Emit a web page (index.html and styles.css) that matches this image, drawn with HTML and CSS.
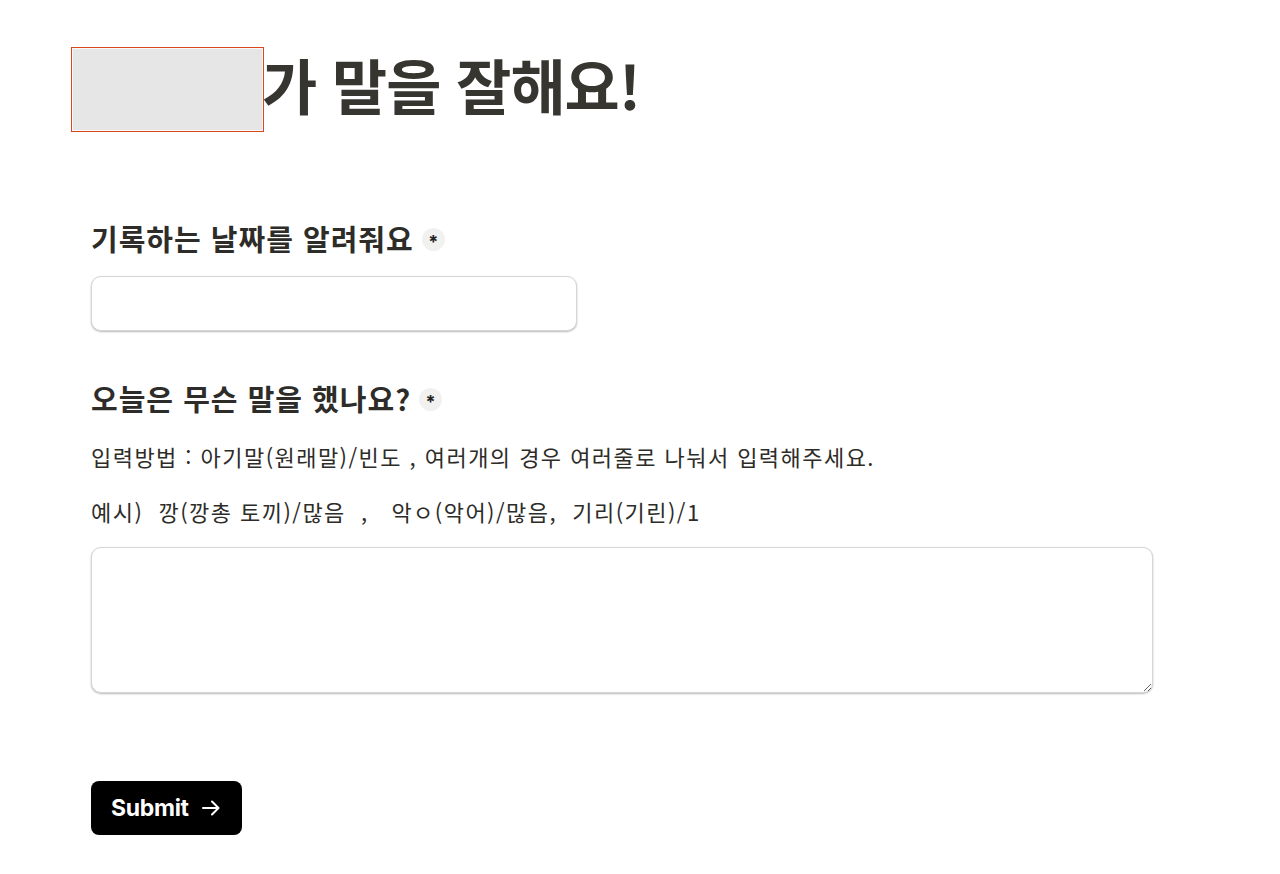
FILE: index.html
```html
<!DOCTYPE html>
<html lang="ko">
<head>
<meta charset="utf-8">
<title>말을 잘해요</title>
<link rel="stylesheet" href="styles.css">
</head>
<body>
<main class="page">
  <header class="title-row">
    <div class="name-box"><div class="name-fill"></div></div>
    <h1 class="title">가 말을 잘해요!</h1>
  </header>
  <form class="form">
    <section class="field field-date">
      <div class="label-row">
        <span class="label">기록하는 날짜를 알려줘요</span>
        <span class="req">*</span>
      </div>
      <input class="input" type="text">
    </section>
    <section class="field field-words">
      <div class="label-row">
        <span class="label">오늘은 무슨 말을 했나요?</span>
        <span class="req">*</span>
      </div>
      <p class="desc">입력방법 : 아기말(원래말)/빈도 , 여러개의 경우 여러줄로 나눠서 입력해주세요.</p>
      <p class="desc">예시)  깡(깡총 토끼)/많음  ,   악ㅇ(악어)/많음,  기리(기린)/1</p>
      <textarea class="textarea"></textarea>
    </section>
    <div class="actions">
      <button class="submit" type="button">Submit
        <svg class="arrow" width="20" height="20" viewBox="0 0 20 20" fill="none" stroke="currentColor" stroke-width="2" stroke-linecap="round" stroke-linejoin="round"><path d="M2 10h15"/><path d="M11 3.5l6.5 6.5-6.5 6.5"/></svg>
      </button>
    </div>
  </form>
</main>
</body>
</html>
```
FILE: styles.css
```css
* { box-sizing: border-box; }
html, body { margin: 0; padding: 0; background: #fff; }
body {
  font-family: "Inter", "Noto Sans CJK KR", sans-serif;
  color: #2f2e2a;
}
.page {
  padding: 47px 0 0 71px;
}
.title-row {
  display: flex;
  align-items: center;
  height: 85px;
}
.name-box {
  width: 193px;
  height: 85px;
  background: #d9481f;
  padding: 1px;
  flex-shrink: 0;
}
.name-fill {
  width: 100%;
  height: 100%;
  background: #e6e6e6;
  border: 1px solid #f8f8f8;
}
.title {
  margin: 0 0 0 -2px;
  font-family: "Noto Sans CJK KR", sans-serif;
  font-size: 60px;
  font-weight: 700;
  color: #37352f;
  letter-spacing: -1px;
  line-height: 1;
  padding-bottom: 12px;
}
.form {
  padding: 86px 0 0 20px;
  width: 1082px;
}
.label-row {
  display: flex;
  align-items: center;
  gap: 8px;
  height: 40px;
}
.label {
  font-family: "Noto Sans CJK KR", sans-serif;
  font-size: 29px;
  font-weight: 700;
  letter-spacing: 1px;
  color: #2d2c28;
  line-height: 40px;
}
.req {
  width: 23px;
  height: 23px;
  border-radius: 50%;
  background: #f1f1f0;
  font-size: 18px;
  font-weight: 700;
  color: #222;
  display: flex;
  align-items: center;
  justify-content: center;
  padding-top: 5px;
  margin-top: 2px;
}
.input {
  display: block;
  margin-top: 18px;
  width: 486px;
  height: 55px;
  border: 1px solid #d6d6d6;
  border-radius: 10px;
  box-shadow: 0 1px 2px rgba(0,0,0,0.28);
  background: #fff;
}
.field-words { margin-top: 47px; }
.desc {
  margin: 0;
  font-family: "Noto Sans CJK KR", sans-serif;
  font-size: 22px;
  letter-spacing: 1.45px;
  color: #2d2c28;
  white-space: pre-wrap;
  line-height: 30px;
}
.field-words .label-row + .desc { margin-top: 23px; }
.desc + .desc { margin-top: 25px; }
.textarea {
  display: block;
  margin-top: 21px;
  width: 1062px;
  height: 146px;
  border: 1px solid #d6d6d6;
  border-radius: 10px;
  box-shadow: 0 1px 2px rgba(0,0,0,0.28);
  background: #fff;
  resize: vertical;
}
.actions { margin-top: 88px; }
.submit {
  display: inline-flex;
  align-items: center;
  gap: 12px;
  height: 54px;
  padding: 0 21px 0 20px;
  background: #000;
  color: #fff;
  border: none;
  border-radius: 8px;
  font-family: "Inter", sans-serif;
  font-size: 23px;
  font-weight: 700;
  letter-spacing: -0.3px;
}
.arrow { width: 20px; height: 20px; }
```
